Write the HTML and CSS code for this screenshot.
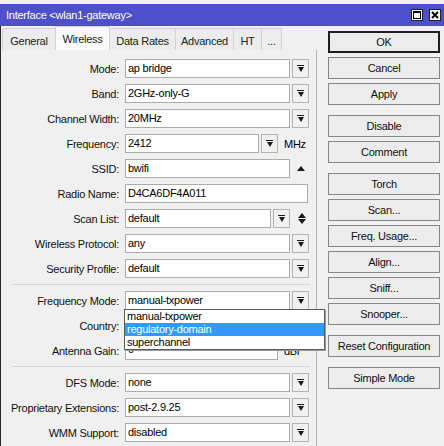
FILE: index.html
```html
<!DOCTYPE html>
<html><head><meta charset="utf-8"><title>Interface &lt;wlan1-gateway&gt;</title>
<link rel="stylesheet" href="styles.css"></head><body>
<div class="win">
	<div class="cap">
		<span class="cap-t">Interface &lt;wlan1-gateway&gt;</span>
		<span class="cap-b"><svg width="8" height="8" viewBox="0 0 8 8"><rect x="0.5" y="0.5" width="7" height="7" fill="none" stroke="#000"/><rect x="0" y="0" width="8" height="2" fill="#000"/></svg></span>
		<span class="cap-b cb2"><svg width="8" height="8" viewBox="0 0 8 8"><path d="M1 1L7 7M7 1L1 7" stroke="#000" stroke-width="1.8"/></svg></span>
	</div>
	<div class="main">
		<div class="left">
			<div class="tabs">
				<span class="tab w-gen">General</span>
				<span class="tab on w-wir">Wireless</span>
				<span class="tab w-dr">Data Rates</span>
				<span class="tab w-adv">Advanced</span>
				<span class="tab w-ht">HT</span>
				<span class="tab w-more">...</span>
			</div>
			<div class="panel">
				<div class="row"><label>Mode:</label><span class="in">ap bridge</span><span class="dd"></span></div>
				<div class="row"><label>Band:</label><span class="in">2GHz-only-G</span><span class="dd"></span></div>
				<div class="row"><label>Channel Width:</label><span class="in">20MHz</span><span class="dd"></span></div>
				<div class="row"><label>Frequency:</label><span class="in w-freq">2412</span><span class="dd"></span><span class="unit">MHz</span></div>
				<div class="row"><label>SSID:</label><span class="in">bwifi</span><span class="up"></span></div>
				<div class="row"><label>Radio Name:</label><span class="in w-full">D4CA6DF4A011</span></div>
				<div class="row"><label>Scan List:</label><span class="in w-scan">default</span><span class="dd"></span><span class="updn"><i class="up"></i><i class="down"></i></span></div>
				<div class="row"><label>Wireless Protocol:</label><span class="in">any</span><span class="dd"></span></div>
				<div class="row"><label>Security Profile:</label><span class="in">default</span><span class="dd"></span></div>
				<div class="sep"></div>
				<div class="row">
					<label>Frequency Mode:</label><span class="in">manual-txpower</span><span class="dd"></span>
					<div class="pop">
						<div class="opt">manual-txpower</div>
						<div class="opt sel">regulatory-domain</div>
						<div class="opt">superchannel</div>
					</div>
				</div>
				<div class="row"><label>Country:</label><span class="in"></span><span class="dd"></span></div>
				<div class="row"><label>Antenna Gain:</label><span class="in w-gain gain">0</span><span class="unit">dBi</span></div>
				<div class="sep s2"></div>
				<div class="row"><label>DFS Mode:</label><span class="in">none</span><span class="dd"></span></div>
				<div class="row"><label>Proprietary Extensions:</label><span class="in">post-2.9.25</span><span class="dd"></span></div>
				<div class="row"><label>WMM Support:</label><span class="in">disabled</span><span class="dd"></span></div>
			</div>
		</div>
		<div class="btns">
			<span class="btn def">OK</span>
			<span class="btn">Cancel</span>
			<span class="btn gap">Apply</span>
			<span class="btn">Disable</span>
			<span class="btn gap">Comment</span>
			<span class="btn">Torch</span>
			<span class="btn">Scan...</span>
			<span class="btn">Freq. Usage...</span>
			<span class="btn">Align...</span>
			<span class="btn">Sniff...</span>
			<span class="btn gap">Snooper...</span>
			<span class="btn gap">Reset Configuration</span>
			<span class="btn">Simple Mode</span>
		</div>
	</div>
</div>
</body></html>
```
FILE: styles.css
```css
* { box-sizing: border-box; }
body { margin: 0; background: #f0f0f0; color: #000;
	font: 11px "Liberation Sans", Arial, sans-serif; letter-spacing: -0.25px; }
.win { width: 444px; height: 446px; overflow: hidden; background: #f0f0f0; }

/* caption */
.cap { margin-top: 4px; height: 22px; background: #4d50c8; color: #fff;
	display: flex; align-items: center; padding: 0 3px 0 6px; }
.cap-t { flex: 1; }
.cap-b { width: 12px; height: 12px; border: 1px solid #222; background: #f4f4f4;
	display: flex; align-items: center; justify-content: center; }
.cb2 { margin-left: 6px; }

.main { display: flex; height: 420px; border-left: 1px solid #2a2a2a; }
.left { width: 316px; display: flex; flex-direction: column; }

/* tabs */
.tabs { height: 24px; display: flex; align-items: flex-end; padding-left: 1px; }
.tab { height: 22px; padding-top: 3px; margin-right: -1px; display: flex; align-items: center;
	justify-content: center; border: 1px solid #d2d2d2; border-bottom: 0; background: #ececec; color: #222; }
.tab.on { height: 24px; padding-top: 0; background: #fafafa; position: relative; z-index: 1; }
.w-gen { width: 54px; }
.w-wir { width: 55px; }
.w-dr { width: 67px; }
.w-adv { width: 59px; }
.w-ht { width: 29px; }
.w-more { width: 21px; }

/* form */
.panel { flex: 1; border-right: 1px solid #b0b0b0; padding-top: 9px; }
.row { display: flex; align-items: center; height: 19px; margin-bottom: 6px; position: relative; }
.row label { width: 118px; margin-right: 6px; text-align: right; white-space: nowrap; color: #111; }
.in { width: 165px; height: 19px; background: #fff; border: 1px solid #ababab;
	padding-left: 2px; line-height: 17px; white-space: nowrap; overflow: hidden; }
.w-freq { width: 134px; }
.w-full { width: 183px; }
.w-scan { width: 146px; }
.w-gain { width: 153px; }
.gain { line-height: 15px; }
.dd { width: 17px; height: 19px; margin-left: 2px; border: 1px solid #b4b4b4; background: #f0f0f0;
	display: flex; flex-direction: column; align-items: center; justify-content: center; gap: 1px; }
.dd::before { content: ''; width: 7px; height: 1px; background: #1a1a1a; }
.dd::after { content: ''; width: 0; height: 0; border-left: 3.5px solid transparent;
	border-right: 3.5px solid transparent; border-top: 5px solid #1a1a1a; }
.unit { margin-left: 6px; }
.up, .down { display: block; width: 0; height: 0; border-left: 4px solid transparent; border-right: 4px solid transparent; }
.up { border-bottom: 5px solid #1a1a1a; }
.down { border-top: 5px solid #1a1a1a; }
.row > .up { margin-left: 7px; }
.updn { margin-left: 8px; display: flex; flex-direction: column; gap: 1px; }
.sep { height: 1px; background: #d8d8d8; margin: 3px 6px 6px 11px; }
.sep.s2 { margin-top: 4px; }

/* open combo list */
.pop { position: absolute; left: 123px; top: 18px; width: 201px; z-index: 2;
	background: #fff; border: 1px solid #5a5a5a; box-shadow: 1px 1px 0 #9a9a9a; }
.opt { height: 13px; line-height: 13px; padding-left: 2px; white-space: nowrap; }
.opt.sel { background: #3399ff; color: #fff; }

/* buttons */
.btns { padding: 5px 0 0 11px; display: flex; flex-direction: column; }
.btn { width: 112px; height: 22px; margin-bottom: 4px; border: 1px solid #868686; background: #ececec;
	display: flex; align-items: center; justify-content: center; white-space: nowrap; color: #111; }
.btn.def { border: 2px solid #1e1e1e; }
.btn.gap { margin-bottom: 10px; }
```
